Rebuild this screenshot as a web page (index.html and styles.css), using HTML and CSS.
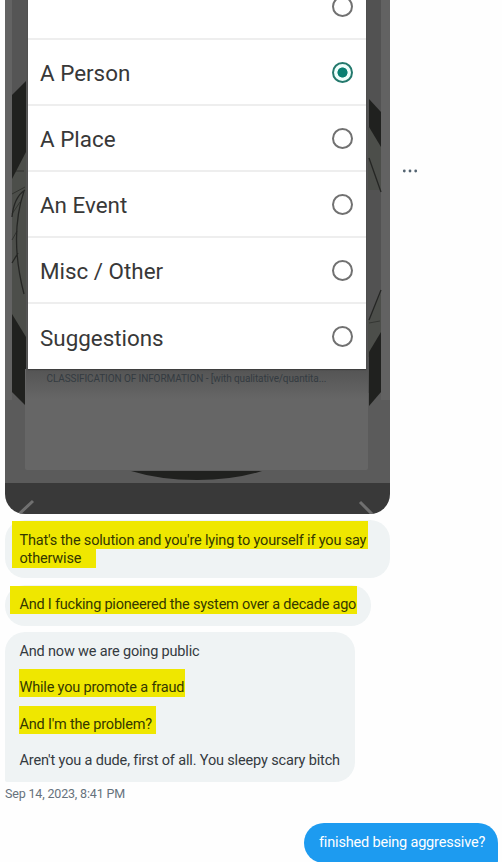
FILE: index.html
```
<!DOCTYPE html>
<html lang="en">
<head>
    <meta charset="UTF-8">
    <meta name="viewport" content="width=device-width, initial-scale=1.0">
    <title>Messages</title>
    <link rel="stylesheet" href="styles.css">
</head>
<body>
    <div class="chat">
        <div class="photo-row">
            <div class="photo">
                <svg class="art" viewBox="5 0 385 514" width="385" height="514">
                    <defs>
                        <linearGradient id="shade" x1="0" y1="0" x2="0" y2="1">
                            <stop offset="0" stop-color="#545454"/>
                            <stop offset="1" stop-color="#666"/>
                        </linearGradient>
                    </defs>
                    <rect x="5" y="0" width="385" height="483" fill="#5b5b5b"/>
                    <rect x="5" y="0" width="7" height="400" fill="#636363"/>
                    <rect x="381" y="0" width="9" height="400" fill="#626262"/>
                    <rect x="12" y="0" width="16" height="393" fill="#555"/>
                    <rect x="366" y="0" width="15" height="393" fill="#525252"/>
                    <path d="M12 152h14v240H12zM368 127h13v230h-13z" fill="#4c4e4a"/>
                    <path d="M366 190h15v103l-12 27h-3z" fill="#525252"/>
                    <path d="M12 392l14 15v20H12zM369 406l12-14v30h-12z" fill="#5b5b5b"/>
                    <g fill="#20211f">
                        <path d="M12 95l14-14v71l-14 27z"/>
                        <path d="M12 314l14 23v69l-14-14z"/>
                        <path d="M369 99l12 13v35l-12-20z"/>
                        <path d="M369 352l12-20v60l-12 14z"/>
                    </g>
                    <g fill="none" stroke="#252624" stroke-width="1.3">
                        <path d="M12 217q2-20 13-27M12 263l6-10M24 191q-15 45 0 103"/>
                        <path d="M12 171h12M12 194l13-7M12 214l8-12M12 240l5-9" stroke-width=".7"/>
                        <path d="M369 158l12 34M369 320l12-30"/>
                        <path d="M369 323l11-2" stroke-width=".6"/>
                    </g>
                    <path d="M25 369h343v99q0 2-2 2H27q-2 0-2-2z" fill="#666"/>
                    <rect x="26" y="369" width="342" height="30" fill="url(#shade)"/>
                    <path d="M131 471h131q-28 9-65 9t-66-9z" fill="#20211f"/>
                    <rect x="5" y="483" width="385" height="31" fill="#393939"/>
                    <path d="M18 515l15-14M360 502l13 13" stroke="#707070" stroke-width="3"/>
                </svg>
                <div class="dialog">
                    <div class="option"><span></span><i class="radio"></i></div>
                    <div class="option"><span>A Person</span><i class="radio checked"></i></div>
                    <div class="option"><span>A Place</span><i class="radio"></i></div>
                    <div class="option"><span>An Event</span><i class="radio"></i></div>
                    <div class="option"><span>Misc / Other</span><i class="radio"></i></div>
                    <div class="option"><span>Suggestions</span><i class="radio"></i></div>
                </div>
                <div class="caption">CLASSIFICATION OF INFORMATION - [with qualitative/quantita...</div>
            </div>
            <svg class="more" viewBox="0 0 16 4" width="16" height="4">
                <circle cx="2.3" cy="2" r="1.4"/><circle cx="8" cy="2" r="1.4"/><circle cx="13.7" cy="2" r="1.4"/>
            </svg>
        </div>

        <div class="bubble first">
            <div class="mark mark-top">That's the solution and you're lying to yourself if you say</div>
            <div class="mark mark-wrap">otherwise</div>
        </div>
        <div class="bubble second">
            <div class="mark mark-line">And I fucking pioneered the system over a decade ago</div>
        </div>
        <div class="bubble group">
            <div class="line">And now we are going public</div>
            <div class="mark mark-fraud">While you promote a fraud</div>
            <div class="mark mark-problem">And I'm the problem?</div>
            <div class="line last">Aren't you a dude, first of all. You sleepy scary bitch</div>
        </div>
        <div class="time">Sep 14, 2023, 8:41 PM</div>
        <div class="bubble reply">finished being aggressive?</div>
    </div>
</body>
</html>
```
FILE: styles.css
```
* {
    box-sizing: border-box;
}
body {
    margin: 0;
    background: #fefefe;
    font-family: "Roboto", Arial, sans-serif;
    color: #343a3f;
}
.chat {
    display: flex;
    flex-direction: column;
    align-items: flex-start;
    height: 862px;
    padding-left: 5px;
    overflow: hidden;
}
.photo-row {
    display: flex;
    flex-shrink: 0;
    height: 514px;
}
.photo {
    position: relative;
    width: 385px;
    height: 514px;
    padding-left: 23px;
    overflow: hidden;
    border-radius: 0 0 20px 20px;
}
.art {
    position: absolute;
    top: 0;
    left: 0;
}
.dialog {
    position: relative;
    width: 338px;
    margin-top: -26px;
    background: #fff;
    box-shadow: 0 1px 1px rgba(0, 0, 0, 0.25);
}
.option {
    display: flex;
    justify-content: space-between;
    align-items: center;
    height: 66px;
    padding: 0 13px 0 12px;
    border-bottom: 2px solid #eee;
    font-size: 22.4px;
    color: #383838;
}
.option span {
    padding-top: 2px;
}
.option:last-child {
    height: 65px;
    border-bottom: none;
}
.radio {
    width: 21px;
    height: 21px;
    border: 2px solid #717171;
    border-radius: 50%;
}
.radio.checked {
    border-color: #24796d;
    background: radial-gradient(circle, #087f71 4.7px, #effffc 5.4px);
}
.caption {
    position: relative;
    margin: 3px 0 0 18.5px;
    font-size: 10px;
    line-height: 13px;
    letter-spacing: -0.1px;
    white-space: nowrap;
    color: #343b41;
}
.more {
    margin: 169px 0 0 12px;
    fill: #536471;
}
.bubble {
    flex-shrink: 0;
    padding-left: 14.5px;
    border-radius: 20px;
    background: #eff3f4;
    font-size: 14.5px;
    line-height: 19px;
    letter-spacing: -0.18px;
    white-space: nowrap;
}
.mark {
    width: fit-content;
    background: #efe700;
    color: #343800;
}
.first {
    width: 385px;
    height: 58px;
    margin-top: 6px;
    padding-top: 1px;
}
.mark-top {
    width: 356px;
    height: 28px;
    margin-left: -8px;
    padding: 10px 0 0 8px;
}
.mark-wrap {
    width: 84px;
    height: 19px;
    margin-left: -8px;
    padding-left: 8px;
}
.second {
    width: 366px;
    height: 41px;
    margin-top: 7px;
    padding-top: 1px;
    letter-spacing: -0.22px;
}
.mark-line {
    width: 347px;
    height: 28px;
    margin-left: -10px;
    padding: 9px 0 0 10px;
}
.group {
    width: 350px;
    height: 150px;
    margin-top: 6px;
    padding-top: 10px;
    border-bottom-left-radius: 2px;
}
.mark-fraud {
    width: 166px;
    height: 28px;
    margin: 8px 0 0 -1px;
    padding: 9px 0 0 1px;
}
.mark-problem {
    width: 137px;
    height: 28px;
    margin: 9px 0 0 -1px;
    padding: 9px 0 0 1px;
}
.last {
    margin-top: 17px;
    letter-spacing: -0.15px;
}
.time {
    flex-shrink: 0;
    margin-top: 3px;
    font-size: 12.5px;
    line-height: 18px;
    letter-spacing: -0.17px;
    color: #66727c;
}
.reply {
    align-self: flex-end;
    width: 194px;
    height: 40px;
    margin: 20px 4px 0 0;
    padding: 10px 0 0 15px;
    border-bottom-right-radius: 2px;
    background: #1d9bf0;
    color: #fff;
}
```
